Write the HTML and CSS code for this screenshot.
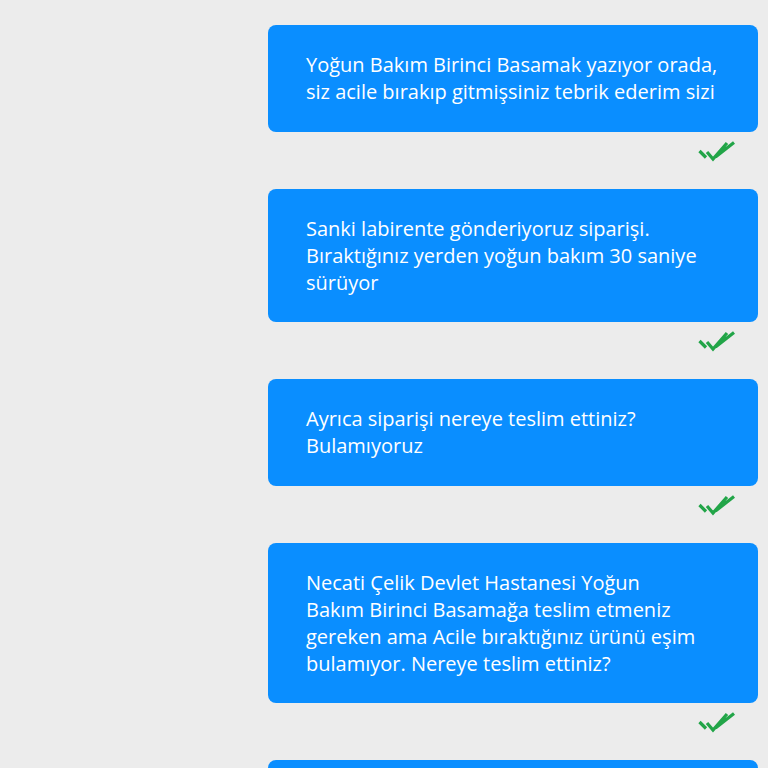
FILE: index.html
```html
<!DOCTYPE html>
<html lang="tr">
<head>
<meta charset="utf-8">
<link rel="stylesheet" href="styles.css">
</head>
<body>
<div class="chat">
  <div class="msg">
    <div class="bubble">Yoğun Bakım Birinci Basamak yazıyor orada,<br>siz acile bırakıp gitmişsiniz tebrik ederim sizi</div>
    <svg class="ticks" viewBox="0 0 38 22" width="38" height="22"><path d="M1.5 10 L8 16.5 M9 11 L15 18 L29 2 M17.5 16 L36 1.5"/></svg>
  </div>
  <div class="msg">
    <div class="bubble">Sanki labirente gönderiyoruz siparişi.<br>Bıraktığınız yerden yoğun bakım 30 saniye<br>sürüyor</div>
    <svg class="ticks" viewBox="0 0 38 22" width="38" height="22"><path d="M1.5 10 L8 16.5 M9 11 L15 18 L29 2 M17.5 16 L36 1.5"/></svg>
  </div>
  <div class="msg">
    <div class="bubble">Ayrıca siparişi nereye teslim ettiniz?<br>Bulamıyoruz</div>
    <svg class="ticks" viewBox="0 0 38 22" width="38" height="22"><path d="M1.5 10 L8 16.5 M9 11 L15 18 L29 2 M17.5 16 L36 1.5"/></svg>
  </div>
  <div class="msg">
    <div class="bubble">Necati Çelik Devlet Hastanesi Yoğun<br>Bakım Birinci Basamağa teslim etmeniz<br>gereken ama Acile bıraktığınız ürünü eşim<br>bulamıyor. Nereye teslim ettiniz?</div>
    <svg class="ticks" viewBox="0 0 38 22" width="38" height="22"><path d="M1.5 10 L8 16.5 M9 11 L15 18 L29 2 M17.5 16 L36 1.5"/></svg>
  </div>
  <div class="msg">
    <div class="bubble bubble-cut"></div>
  </div>
</div>
</body>
</html>
```
FILE: styles.css
```css
html, body {
  margin: 0;
  padding: 0;
  background: #ececec;
}
body {
  font-family: "Open Sans", "Noto Sans", sans-serif;
  overflow: hidden;
  height: 768px;
}
.chat {
  display: flex;
  flex-direction: column;
  align-items: flex-end;
  padding: 25px 10px 0 0;
}
.msg {
  display: flex;
  flex-direction: column;
  align-items: flex-end;
  margin-bottom: 26px;
}
.bubble {
  box-sizing: border-box;
  width: 490px;
  padding: 26px 38px 26.5px;
  background: #0a8eff;
  color: #ffffff;
  border-radius: 8px;
  font-size: 20px;
  line-height: 27px;
  white-space: nowrap;
}
.bubble-cut {
  height: 60px;
}
.ticks {
  display: block;
  margin: 9px 22px 0 0;
  fill: none;
  stroke: #22a548;
  stroke-width: 3.2;
  stroke-linecap: butt;
}
```
